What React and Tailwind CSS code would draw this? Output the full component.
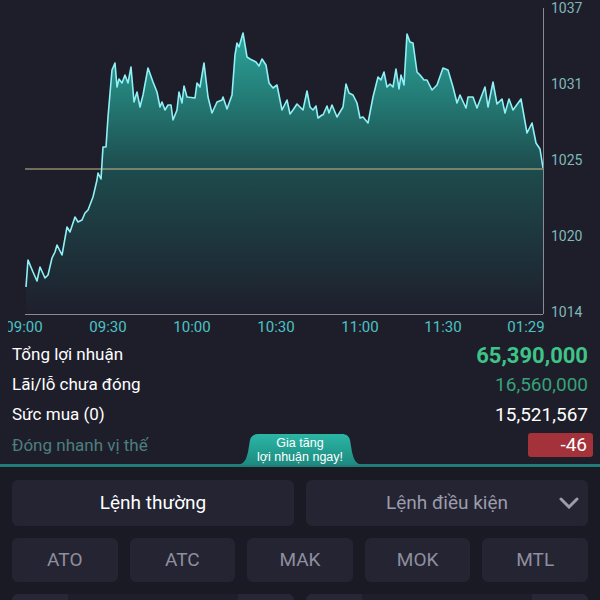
import React from "react";

const pts = [
  [26, 287], [28, 260], [33, 272], [37, 281], [40, 267], [45, 278], [48, 275], [52, 258], [55, 252], [57, 245],
  [62, 255], [67, 227], [70, 232], [75, 217], [78, 222], [82, 220], [85, 213], [88, 210], [93, 197], [97, 180],
  [98, 173], [101, 179], [103, 147], [106, 147], [108, 117], [112, 70], [115, 63], [117, 87], [119, 79], [122, 83],
  [125, 75], [128, 83], [131, 67], [134, 102], [137, 92], [140, 107], [143, 95], [148, 68], [153, 82], [157, 92],
  [160, 107], [162, 102], [165, 110], [168, 105], [171, 105], [173, 120], [177, 110], [179, 92], [182, 103], [184, 86],
  [187, 97], [195, 98], [197, 83], [200, 87], [204, 63], [208, 97], [212, 113], [217, 102], [222, 100], [223, 97],
  [227, 109], [232, 95], [235, 55], [237, 43], [239, 47], [243, 33], [247, 57], [250, 59], [256, 62], [259, 66],
  [262, 59], [266, 65], [269, 83], [273, 88], [277, 85], [282, 110], [287, 100], [290, 114], [293, 110], [297, 104],
  [300, 107], [303, 110], [307, 91], [310, 107], [313, 110], [316, 106], [318, 118], [322, 115], [323, 115], [327, 106],
  [329, 113], [332, 105], [337, 117], [343, 107], [346, 84], [349, 93], [353, 95], [357, 103], [360, 118], [363, 117],
  [368, 123], [373, 97], [378, 77], [381, 80], [384, 72], [387, 87], [390, 84], [393, 87], [396, 69], [399, 89],
  [401, 75], [404, 85], [407, 34], [410, 42], [413, 43], [417, 72], [420, 75], [424, 80], [427, 80], [432, 90],
  [437, 85], [443, 68], [448, 70], [453, 87], [457, 103], [460, 95], [466, 108], [468, 97], [473, 97], [477, 108],
  [485, 87], [488, 107], [493, 82], [497, 104], [502, 99], [505, 113], [509, 99], [513, 110], [521, 99], [527, 133],
  [532, 123], [536, 143], [540, 149], [543, 168],
];

const line = pts.map(([x, y], i) => `${i ? "L" : "M"}${x} ${y}`).join(" ");
const area = `${line} L543 314 L26 314 Z`;

const yLabels = [
  ["1037", 8],
  ["1031", 84],
  ["1025", 160],
  ["1020", 236],
  ["1014", 312],
];

// label centres on the time axis
const xLabels = [
  ["09:00", 24],
  ["09:30", 108],
  ["10:00", 192],
  ["10:30", 276],
  ["11:00", 360],
  ["11:30", 443],
  ["01:29", 526],
];

function Chart() {
  return (
    <div className="relative h-[340px]">
      <svg width="600" height="320" className="absolute left-0 top-0">
        <defs>
          <linearGradient id="fill" x1="0" y1="30" x2="0" y2="314" gradientUnits="userSpaceOnUse">
            <stop offset="0" stopColor="#2aa89c" />
            <stop offset="0.5" stopColor="#1d4a4c" />
            <stop offset="1" stopColor="#1e1f2c" />
          </linearGradient>
        </defs>
        <path d={area} fill="url(#fill)" />
        <line x1="25" y1="169" x2="543" y2="169" stroke="#c9b98c" strokeWidth="1.2" />
        <path d={line} fill="none" stroke="#8ff0f5" strokeWidth="1.6" strokeLinejoin="round" />
        <line x1="543.5" y1="8" x2="543.5" y2="314" stroke="#8a8a96" strokeWidth="1" />
        <line x1="25" y1="314.5" x2="543" y2="314.5" stroke="#8a8a96" strokeWidth="1" />
      </svg>
      {yLabels.map(([t, y]) => (
        <div
          key={t}
          className="absolute left-[551px] text-[14px] leading-none text-[#7fb8b8]"
          style={{ top: y - 7 }}
        >
          {t}
        </div>
      ))}
      <div className="absolute left-[8px] top-[317px] w-[592px] h-[22px] overflow-hidden text-[15px] leading-[20px] text-[#4cc3c3]">
        {xLabels.map(([t, cx]) => (
          <span key={t} className="absolute top-0 w-[60px] text-center" style={{ left: cx - 8 - 30 }}>
            {t}
          </span>
        ))}
      </div>
    </div>
  );
}

export default function App() {
  return (
    <div className="w-[600px] h-[600px] overflow-hidden bg-[#1e1e2b] font-['Roboto',sans-serif]">
      <Chart />
      <div className="px-3 flex flex-col">
        <div className="flex items-center justify-between h-[30px]">
          <span className="text-[17px] text-white">Tổng lợi nhuận</span>
          <span className="text-[22px] font-bold text-[#3ec487]">65,390,000</span>
        </div>
        <div className="flex items-center justify-between h-[30px]">
          <span className="text-[17px] text-white">Lãi/lỗ chưa đóng</span>
          <span className="text-[19px] text-[#36a277]">16,560,000</span>
        </div>
        <div className="flex items-center justify-between h-[30px]">
          <span className="text-[17px] text-white">Sức mua (0)</span>
          <span className="text-[19px] text-white">15,521,567</span>
        </div>
        <div className="flex items-center justify-between h-[30px] mb-[4px]">
          <span className="text-[17px] text-[#4d7e80] pt-[2px]">Đóng nhanh vị thế</span>
          <span className="w-[65px] h-[24px] rounded-[3px] bg-[#a3323a] text-white text-[19px] leading-[24px] text-right pr-[6px] -mr-[5px]">
            -46
          </span>
        </div>
      </div>
      <div className="relative h-[3px] bg-[#217c77]">
        <div className="absolute left-[236px] bottom-[2px] w-[128px] h-[31px]">
          <svg width="128" height="31" className="absolute inset-0">
            <defs>
              <linearGradient id="badge" x1="0" y1="0" x2="0" y2="1">
                <stop offset="0" stopColor="#2cb6a6" />
                <stop offset="1" stopColor="#1d8a80" />
              </linearGradient>
            </defs>
            <path d="M0 31 C8 31 10 26 12 18 L14 6 C15 2 18 0 22 0 L106 0 C110 0 113 2 114 6 L116 18 C118 26 120 31 128 31 Z" fill="url(#badge)" />
          </svg>
          <div className="relative flex flex-col items-center pt-[2px] text-[12.5px] leading-[14px] text-white font-['Liberation_Sans',sans-serif]">
            <span>Gia tăng</span>
            <span>lợi nhuận ngay!</span>
          </div>
        </div>
      </div>
      <div className="bg-[#1a1a25] px-3 pt-[13px] flex flex-col gap-3 h-[200px]">
        <div className="grid grid-cols-2 gap-3">
          <div className="h-[46px] rounded-md bg-[#242433] flex items-center justify-center text-[19px] text-white">
            Lệnh thường
          </div>
          <div className="relative h-[46px] rounded-md bg-[#242433] flex items-center justify-center text-[19px] text-[#9c9cab]">
            Lệnh điều kiện
            <svg width="20" height="12" viewBox="0 0 20 12" className="absolute right-[9px] top-[17px]">
              <path d="M2 2 L10 10 L18 2" fill="none" stroke="#9c9cab" strokeWidth="3" strokeLinecap="round" />
            </svg>
          </div>
        </div>
        <div className="grid grid-cols-5 gap-3">
          {["ATO", "ATC", "MAK", "MOK", "MTL"].map((t) => (
            <div
              key={t}
              className="h-[44px] rounded-md bg-[#242433] flex items-center justify-center text-[19px] text-[#8f8f9e]"
            >
              {t}
            </div>
          ))}
        </div>
        <div className="grid grid-cols-2 gap-3">
          {[0, 1].map((i) => (
            <div key={i} className="h-[44px] rounded-md bg-[#1f1f2c] flex overflow-hidden">
              <div className="w-[56px] bg-[#272737]" />
              <div className="flex-1" />
              <div className="w-[56px] bg-[#272737]" />
            </div>
          ))}
        </div>
      </div>
    </div>
  );
}
